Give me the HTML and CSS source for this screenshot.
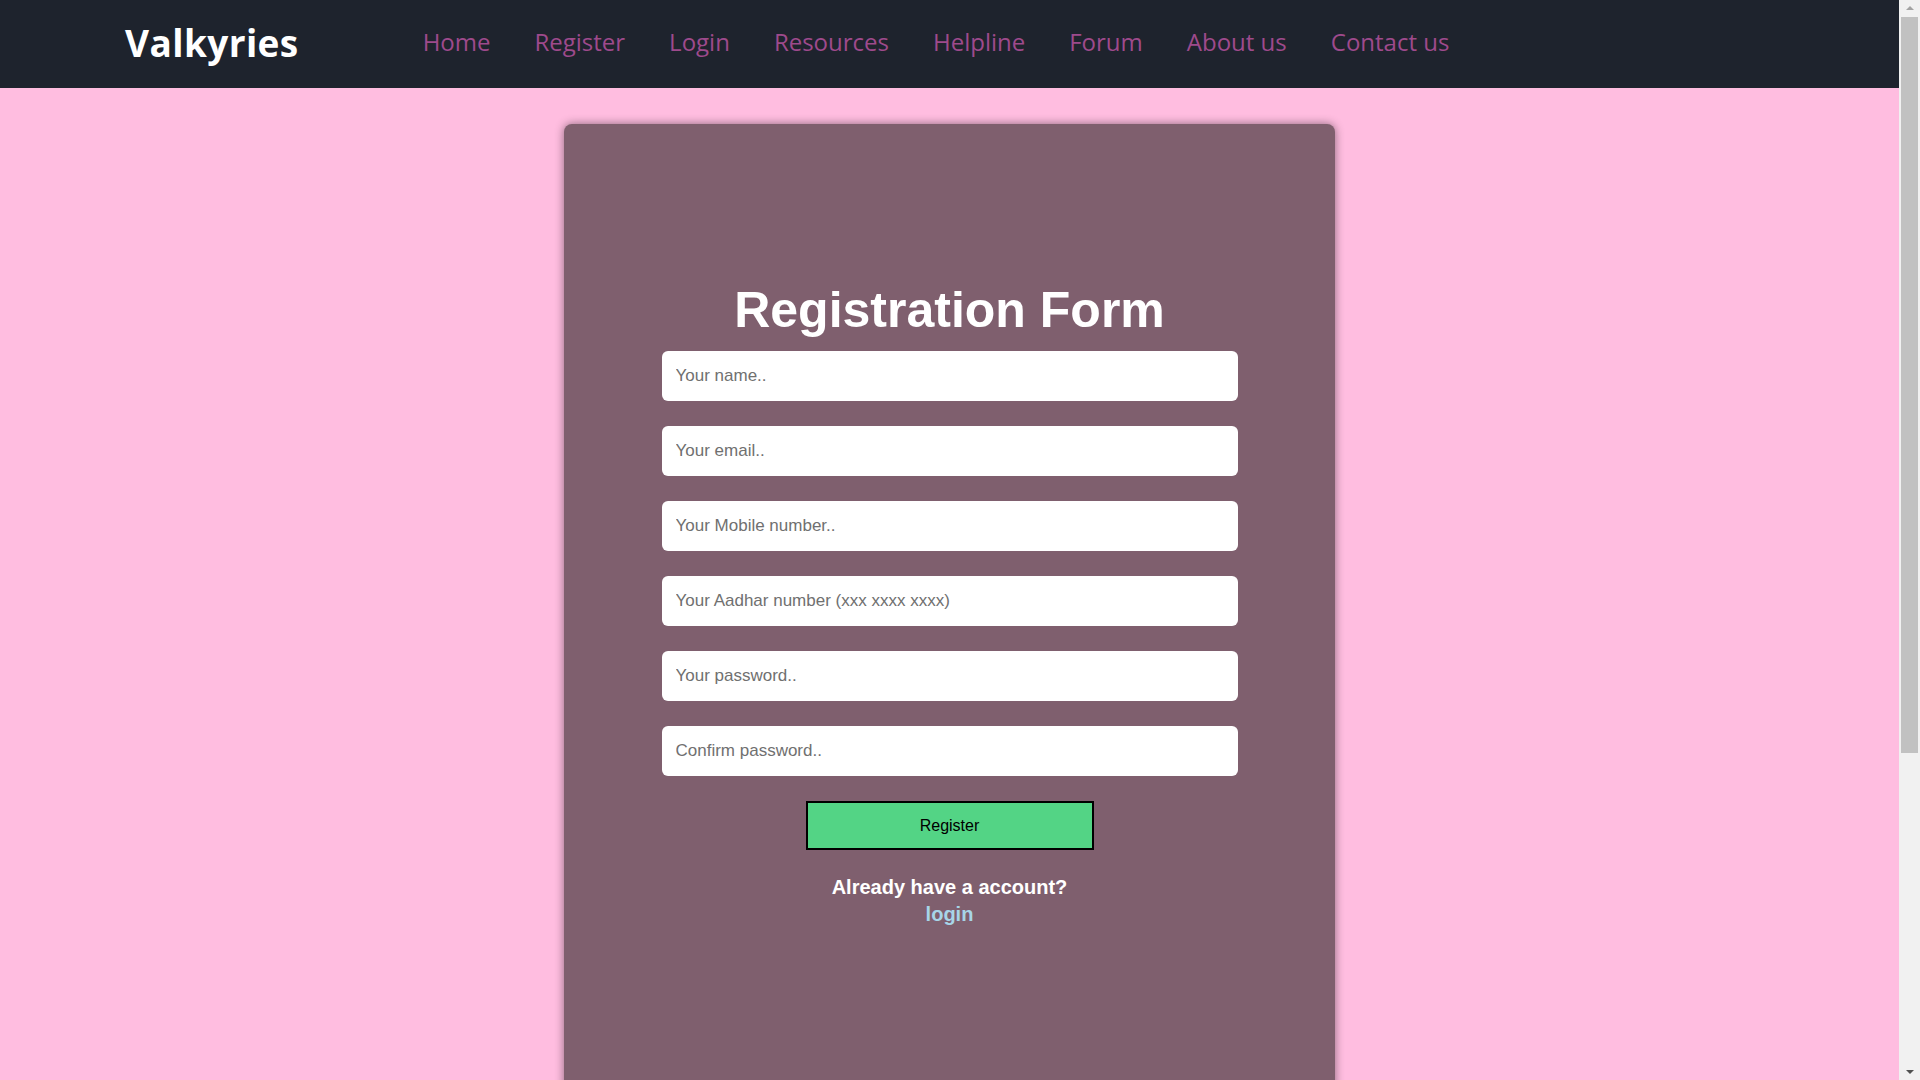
FILE: index.html
```html
<!DOCTYPE html>
<html lang="en">
<head>
<meta charset="UTF-8">
<title>Valkyries - Register</title>
<link rel="stylesheet" href="styles.css">
</head>
<body>
<div class="app">
<nav class="navbar">
  <a class="logo" href="#">Valkyries</a>
  <ul class="nav-links">
    <li><a href="#">Home</a></li>
    <li><a href="#">Register</a></li>
    <li><a href="#">Login</a></li>
    <li><a href="#">Resources</a></li>
    <li><a href="#">Helpline</a></li>
    <li><a href="#">Forum</a></li>
    <li><a href="#">About us</a></li>
    <li><a href="#">Contact us</a></li>
  </ul>
</nav>
<main class="page">
  <section class="card">
    <h1 class="title">Registration Form</h1>
    <form class="form">
      <input class="field" type="text" placeholder="Your name..">
      <input class="field" type="email" placeholder="Your email..">
      <input class="field" type="text" placeholder="Your Mobile number..">
      <input class="field" type="text" placeholder="Your Aadhar number (xxx xxxx xxxx)">
      <input class="field" type="password" placeholder="Your password..">
      <input class="field" type="password" placeholder="Confirm password..">
      <button class="btn" type="button">Register</button>
    </form>
    <p class="already">Already have a account?<br><a class="login-link" href="#">login</a></p>
  </section>
</main>
</div>
<div class="scrollbar" aria-hidden="true">
  <span class="arrow arrow-up"></span>
  <span class="thumb"></span>
  <span class="track-rest"></span>
  <span class="arrow arrow-down"></span>
</div>
</body>
</html>
```
FILE: styles.css
```css
* { box-sizing: border-box; }
html, body { margin: 0; padding: 0; }
body {
  background: #ffbde0;
  font-family: "Liberation Sans", Arial, sans-serif;
  display: flex;
  height: 100vh;
  overflow: hidden;
}
.app {
  flex: 1;
  min-width: 0;
  height: 100vh;
  overflow: hidden;
}
.scrollbar {
  width: 21px;
  flex: none;
  height: 100vh;
  background: #f1f1f1;
  display: flex;
  flex-direction: column;
  align-items: center;
  padding: 0 2px;
}
.arrow {
  width: 0;
  height: 0;
  flex: none;
  border-left: 4px solid transparent;
  border-right: 4px solid transparent;
}
.arrow-up {
  margin: 6px 0 7px;
  border-bottom: 4px solid #a3a3a3;
}
.arrow-down {
  margin: 0 0 6px;
  border-top: 4px solid #505050;
}
.thumb {
  width: 100%;
  height: 736px;
  flex: none;
  background: #c1c1c1;
}
.track-rest { flex: 1; }
.navbar {
  height: 88px;
  background: #1e232d;
  display: flex;
  align-items: center;
  padding-left: 125px;
}
.logo {
  font-family: "Open Sans", "Noto Sans", sans-serif;
  font-weight: 700;
  font-size: 37px;
  color: #ffffff;
  text-decoration: none;
  letter-spacing: 0.4px;
  margin-top: -3px;
}
.nav-links {
  list-style: none;
  display: flex;
  gap: 44px;
  margin: -6px 0 0 124px;
  padding: 0;
}
.nav-links a {
  font-family: "Open Sans", "Noto Sans", sans-serif;
  font-size: 24px;
  color: #9e4a8c;
  text-decoration: none;
}
.page {
  padding: 36px 0 36px;
}
.card {
  width: 771px;
  min-height: 1385px;
  margin: 0 auto;
  background: #7f5f6e;
  border-radius: 8px;
  box-shadow: 0 0 10px rgba(0, 0, 0, 0.45);
  padding-top: 158px;
  display: flex;
  flex-direction: column;
  align-items: center;
}
.title {
  margin: 0 0 13px;
  font-size: 50px;
  line-height: 56px;
  font-weight: 700;
  color: #ffffff;
  text-align: center;
}
.form {
  width: 576px;
  display: flex;
  flex-direction: column;
  align-items: center;
}
.field {
  width: 100%;
  height: 50px;
  margin: 0 0 25px;
  border: none;
  border-radius: 6px;
  background: #ffffff;
  padding: 0 14px;
  font-family: "Liberation Sans", Arial, sans-serif;
  font-size: 17px;
  color: #333;
}
.field::placeholder { color: #707070; }
.btn {
  width: 288px;
  height: 49px;
  background: #53d485;
  border: 2px solid #000;
  font-family: "Liberation Sans", Arial, sans-serif;
  font-size: 16px;
  color: #000;
}
.already {
  margin: 24px 0 0;
  font-size: 20px;
  line-height: 27px;
  font-weight: 700;
  color: #ffffff;
  text-align: center;
}
.login-link {
  color: #a7d5e8;
  text-decoration: none;
}
```
